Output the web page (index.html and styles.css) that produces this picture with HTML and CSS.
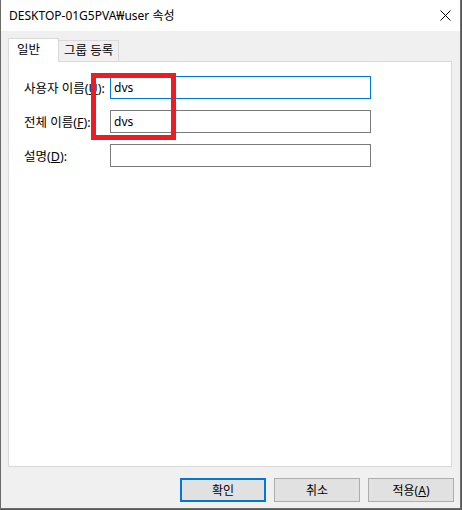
FILE: index.html
```html
<!DOCTYPE html>
<html lang="ko">
<head>
<meta charset="UTF-8">
<meta name="viewport" content="width=device-width, initial-scale=1.0">
<title>DESKTOP-01G5PVA₩user 속성</title>
<link rel="stylesheet" href="styles.css">
</head>
<body>
<div class="window">
  <div class="titlebar">
    <span class="title">DESKTOP-01G5PVA₩user 속성</span>
    <svg class="close" width="11" height="11" viewBox="0 0 11 11">
      <path d="M0.5 0.5 L10.5 10.5 M10.5 0.5 L0.5 10.5" stroke="#000" stroke-width="1"/>
    </svg>
  </div>

  <div class="content">
    <div class="tabs">
      <div class="tab active">일반</div>
      <div class="tab">그룹 등록</div>
    </div>
    <div class="panel">
      <div class="form-row">
        <label for="user">사용자 이름(<u>U</u>):</label>
        <input type="text" id="user" class="focused" value="dvs">
      </div>
      <div class="form-row">
        <label for="full">전체 이름(<u>F</u>):</label>
        <input type="text" id="full" value="dvs">
      </div>
      <div class="form-row">
        <label for="desc">설명(<u>D</u>):</label>
        <input type="text" id="desc" value="">
      </div>
    </div>

    <div class="buttons">
      <button class="btn default">확인</button>
      <button class="btn">취소</button>
      <button class="btn">적용(<u>A</u>)</button>
    </div>
  </div>

  <!-- red highlight drawn over the form -->
  <div class="highlight"></div>
</div>
</body>
</html>
```

FILE: styles.css
```css
html {
  background: #5a5a5a;
}

body {
  margin: 0;
  padding: 0;
  font-family: "Noto Sans", "Noto Sans CJK KR", sans-serif;
  font-size: 12px;
  color: #000;
}

.window {
  position: relative;
  width: 459px;
  height: 508px;
  border-left: 1px solid #6b6b6b;
  border-right: 1px solid #6b6b6b;
  border-bottom: 1px solid #6b6b6b;
  background: #f0f0f0;
  display: flex;
  flex-direction: column;
}

.titlebar {
  height: 31px;
  background: #fff;
  display: flex;
  align-items: center;
  justify-content: space-between;
  padding: 0 9px 0 8px;
}

.title {
  font-size: 12px;
  line-height: 1;
  padding-top: 1px;
}

.close {
  display: block;
}

.content {
  padding: 7px 6px 0 7px;
  display: flex;
  flex-direction: column;
}

.tabs {
  display: flex;
  align-items: flex-end;
  height: 23px;
  position: relative;
  z-index: 1;
  font-size: 12.5px;
}

.tab {
  box-sizing: border-box;
  height: 21px;
  width: 60px;
  padding-left: 5px;
  line-height: 19px;
  border: 1px solid #d9d9d9;
  border-bottom: none;
  border-left: none;
  background: #f0f0f0;
}

.tab.active {
  width: 51px;
  height: 24px;
  margin-bottom: -1px;
  padding-left: 8px;
  line-height: 22px;
  border-left: 1px solid #d9d9d9;
  background: #fff;
}

.panel {
  box-sizing: border-box;
  width: 444px;
  height: 406px;
  background: #fff;
  border: 1px solid #d9d9d9;
  padding: 14px 0 0 15px;
  display: flex;
  flex-direction: column;
  gap: 11px;
}

.form-row {
  display: flex;
  align-items: center;
}

.form-row label {
  width: 86px;
  font-size: 12.5px;
  white-space: nowrap;
}

.form-row input {
  box-sizing: border-box;
  width: 261px;
  height: 23px;
  border: 1px solid #7a7a7a;
  padding: 0 0 1px 3px;
  margin: 0;
  font-family: "Noto Sans", "Noto Sans CJK KR", sans-serif;
  font-size: 12px;
  outline: none;
}

.form-row input.focused {
  border-color: #0078d7;
}

.buttons {
  display: flex;
  justify-content: flex-end;
  gap: 8px;
  margin-top: 11px;
}

.btn {
  box-sizing: border-box;
  width: 86px;
  height: 24px;
  background: #e1e1e1;
  border: 1px solid #adadad;
  font-family: "Noto Sans", "Noto Sans CJK KR", sans-serif;
  font-size: 12px;
  padding: 0;
  color: #000;
}

.btn.default {
  border: 2px solid #0078d7;
}

.highlight {
  position: absolute;
  left: 90px;
  top: 73px;
  width: 75px;
  height: 57px;
  border: 5px solid #ed1c24;
}
```
